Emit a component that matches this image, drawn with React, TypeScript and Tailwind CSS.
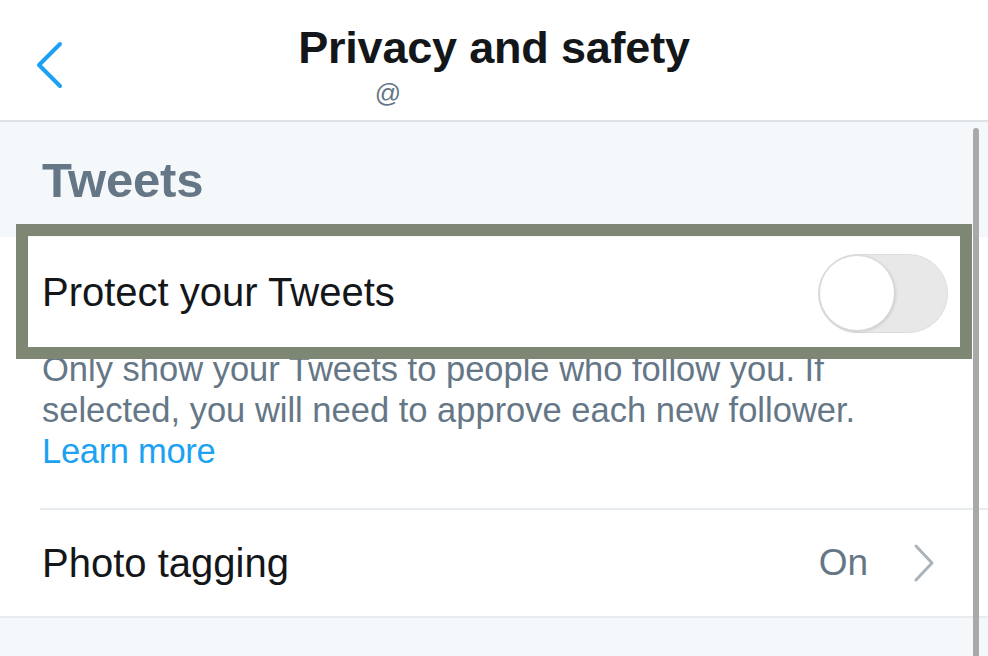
export default function App() {
  return (
    <div
      className="relative w-[988px] h-[656px] overflow-hidden bg-[#f5f8fa]"
      style={{ fontFamily: '"Liberation Sans", Arial, sans-serif' }}
    >
      {/* header */}
      <div className="relative h-[122px] bg-white border-b-2 border-[#dde2e6] flex flex-col items-center">
        <svg className="absolute left-[34px] top-[41px]" width="32" height="48" viewBox="0 0 32 48" fill="none">
          <polyline
            points="26,3 5,24 26,45"
            stroke="#1da1f2"
            strokeWidth="4"
            strokeLinecap="round"
            strokeLinejoin="round"
          />
        </svg>
        <h1 className="mt-[22px] text-[45px] leading-[52px] font-bold text-[#14171a] tracking-[-0.2px]">
          Privacy and safety
        </h1>
        <span className="ml-[-212px] mt-[4px] text-[26px] leading-[30px] text-[#657786]">@</span>
      </div>

      {/* section title */}
      <div className="h-[115px] flex items-center px-[42px]">
        <h2 className="mt-[2px] text-[49px] font-bold text-[#657786] tracking-[-0.2px]">Tweets</h2>
      </div>

      <div className="bg-white">
        <div className="h-[112px] flex items-center justify-between pl-[42px] pr-[40px]">
          <span className="mt-[-2px] text-[40px] text-[#14171a]">Protect your Tweets</span>
          <div className="w-[130px] h-[79px] rounded-full bg-[#e8e8e8] border border-[#dcdcdc] flex items-center">
            <div className="w-[76px] h-[76px] rounded-full bg-white border border-[#d8d8d8] shadow-[1px_1px_3px_rgba(0,0,0,0.12)]" />
          </div>
        </div>
        <div className="pl-[42px] pr-[30px] pt-0 pb-[36px] text-[34.5px] leading-[41px] text-[#657786]">
          <p>Only show your Tweets to people who follow you. If</p>
          <p>selected, you will need to approve each new follower.</p>
          <p className="text-[#1da1f2] tracking-[-0.3px]">Learn more</p>
        </div>
        <div className="ml-[40px] border-t-2 border-[#e6ecf0]" />
        <div className="h-[108px] flex items-center pl-[42px] pr-[52px] border-b-2 border-[#e6ecf0]">
          <span className="flex-1 text-[40px] text-[#14171a]">Photo tagging</span>
          <span className="text-[37px] text-[#657786]">On</span>
          <svg className="ml-[44px]" width="24" height="40" viewBox="0 0 24 40" fill="none">
            <polyline
              points="4,3 20,20 4,37"
              stroke="#aab3ba"
              strokeWidth="3"
              strokeLinecap="round"
              strokeLinejoin="round"
            />
          </svg>
        </div>
      </div>

      {/* annotation box */}
      <div className="absolute left-[16px] top-[224px] w-[956px] h-[135px] border-[12px] border-[#7d8774]" />

      {/* scrollbar */}
      <div className="absolute left-[973px] top-[128px] w-[6px] h-[540px] rounded-full bg-[#a9a9a9]" />
    </div>
  );
}
